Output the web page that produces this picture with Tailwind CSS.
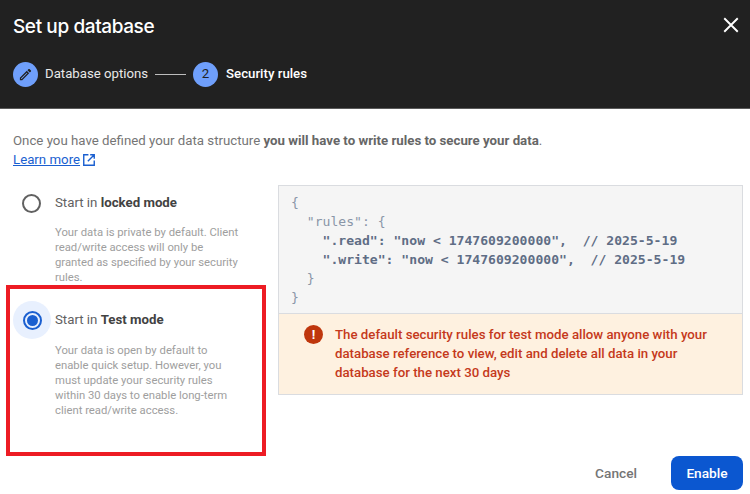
<!DOCTYPE html>
<html lang="en">
<head>
  <meta charset="UTF-8" />
  <title>Set up database</title>
  <script src="https://cdn.jsdelivr.net/npm/@tailwindcss/browser@4"></script>
</head>
<body class="bg-white font-['Roboto',sans-serif] text-[13.25px] text-[#757575] overflow-hidden">
  <div class="relative w-[750px] h-[494px] flex flex-col">

    <!-- Header -->
    <header class="h-[109px] shrink-0 bg-[#212121] border-b border-[#5a5a5a] px-[13px] text-white">
      <div class="flex items-center justify-between h-[54px]">
        <h1 class="text-[19px] font-medium leading-[26px] font-['Inter',sans-serif] tracking-[-0.4px]">Set up database</h1>
        <svg class="w-[18px] h-[18px] -mr-[3px] -mt-[4px]" viewBox="0 0 16 16" fill="none" stroke="white" stroke-width="1.7"><path d="M2 2l12 12M14 2L2 14"/></svg>
      </div>
      <div class="flex items-center h-[26px] mt-[7px]">
        <span class="w-[25px] h-[25px] rounded-full bg-[#6f9ffb] flex items-center justify-center">
          <svg class="w-[15px] h-[15px]" viewBox="0 0 24 24" fill="#212121"><path d="M14.06 9.02l.92.92L5.92 19H5v-.92l9.06-9.06M17.66 3c-.25 0-.51.1-.7.29l-1.83 1.83 3.75 3.75 1.83-1.83c.39-.39.39-1.02 0-1.41l-2.34-2.34c-.2-.2-.45-.29-.71-.29zm-3.6 3.19L3 17.25V21h3.75L17.81 9.94l-3.75-3.75z"/></svg>
        </span>
        <span class="ml-[7px] text-[13.2px] text-[#e8e8e8]">Database options</span>
        <span class="ml-[7px] w-[31px] h-px bg-[#bdbdbd]"></span>
        <span class="ml-[7px] w-[25px] h-[25px] rounded-full bg-[#6f9ffb] flex items-center justify-center text-[13.25px] text-[#212121]">2</span>
        <span class="ml-[8px] text-[13.25px] font-medium">Security rules</span>
      </div>
    </header>

    <!-- Body -->
    <main class="flex-1 px-[13px] pt-[22px]">
      <p class="leading-[19px]">Once you have defined your data structure <b class="font-bold text-[#666666]">you will have to write rules to secure your data</b>.</p>
      <a class="flex items-center gap-[2px] leading-[19px] text-[#1a5fd0]"><span class="underline">Learn more</span>
        <svg class="w-[14px] h-[14px]" viewBox="0 0 24 24" fill="none" stroke="#1a5fd0" stroke-width="2.4"><path d="M11 3H3v18h18v-8M14 3h7v7M21 3L10 14"/></svg>
      </a>

      <div class="flex mt-[16px]">
        <!-- Options -->
        <div class="w-[252px] shrink-0">
          <div class="h-[100px]">
            <label class="flex items-center h-[36px]">
              <span class="w-[19px] h-[19px] ml-[9px] rounded-full border-2 border-[#616161]"></span>
              <span class="ml-[14px] text-[#616161]">Start in <b class="font-bold text-[#424242]">locked mode</b></span>
            </label>
            <p class="ml-[42px] mt-[4px] w-[186px] text-[11.3px] leading-[15px] text-[#9e9e9e]">Your data is private by default. Client read/write access will only be granted as specified by your security rules.</p>
          </div>
          <div class="mt-[16px]">
            <label class="flex items-center h-[38px]">
              <span class="w-[38px] h-[38px] rounded-full bg-[#e8f0fe] flex items-center justify-center">
                <span class="w-[19px] h-[19px] rounded-full border-2 border-[#1a5fd0] flex items-center justify-center">
                  <span class="w-[11px] h-[11px] rounded-full bg-[#1a5fd0]"></span>
                </span>
              </span>
              <span class="ml-[4px] text-[#616161]">Start in <b class="font-bold text-[#424242]">Test mode</b></span>
            </label>
            <p class="ml-[42px] mt-[4px] w-[186px] text-[11.3px] leading-[15px] text-[#9e9e9e]">Your data is open by default to enable quick setup. However, you must update your security rules within 30 days to enable long-term client read/write access.</p>
          </div>
        </div>

        <!-- Rules -->
        <div class="ml-[13px] w-[465px] shrink-0 border border-[#dadce0] h-[210px]">
          <pre class="h-[128px] bg-[#f5f5f5] border-b border-[#dadce0] pl-[12px] pt-[7px] font-['DejaVu_Sans_Mono',monospace] text-[13.1px] leading-[19px] text-[#8a96a8]">{
  "rules": {
<span class="text-[#5f6d85] font-bold">    ".read": "now &lt; 1747609200000",  // 2025-5-19
    ".write": "now &lt; 1747609200000",  // 2025-5-19</span>
  }
}</pre>
          <div class="flex bg-[#fef1e0] h-[80px] pl-[25px] pt-[11px] text-[#c5391b] font-medium leading-[19px]">
            <span class="w-[19px] h-[19px] rounded-full bg-[#bf360c] text-white flex items-center justify-center text-[13px] font-bold shrink-0">!</span>
            <p class="ml-[12px] w-[385px]">The default security rules for test mode allow anyone with your database reference to view, edit and delete all data in your database for the next 30 days</p>
          </div>
        </div>
      </div>
    </main>

    <!-- Footer buttons -->
    <footer class="absolute right-[7px] bottom-[4px] flex items-center text-[13.7px]">
      <button class="text-[#757575] font-medium mr-[34px]">Cancel</button>
      <button class="w-[72px] h-[34px] rounded-[8px] bg-[#0b57d0] text-white font-medium">Enable</button>
    </footer>

    <!-- Annotation -->
    <div class="absolute left-[6px] top-[285px] w-[260px] h-[171px] border-4 border-[#ed1c24]"></div>
  </div>
</body>
</html>
